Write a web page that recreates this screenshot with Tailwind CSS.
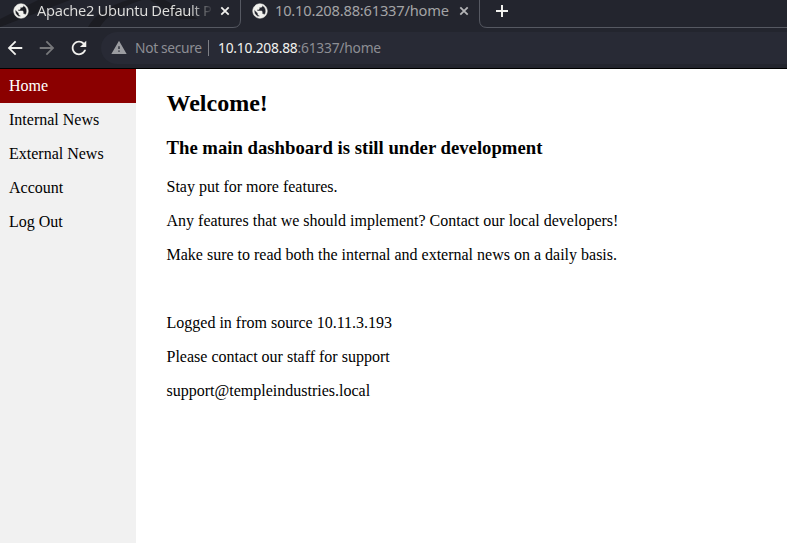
<!DOCTYPE html>
<html lang="en">
<head>
<meta charset="utf-8">
<title>Home</title>
<script src="https://cdn.jsdelivr.net/npm/@tailwindcss/browser@4"></script>
</head>
<body class="h-[543px] w-[787px] overflow-hidden bg-white">
<svg class="hidden"><defs>
<path id="globe" stroke="#f1f1ee" stroke-width=".7" d="M12 2C6.480 2 2 6.480 2 12s4.480 10 10 10 10-4.480 10-10S17.520 2 12 2zm-1 17.930c-3.950-.49-7-3.850-7-7.930 0-.62.08-1.210.21-1.790L9 15v1c0 1.100.9 2 2 2v1.930zm6.900-2.540c-.26-.81-1-1.390-1.900-1.390h-1v-3c0-.55-.45-1-1-1H8v-2h2c.55 0 1-.45 1-1V7h2c1.100 0 2-.9 2-2v-.41c2.930 1.190 5 4.060 5 7.410 0 2.080-.8 3.970-2.100 5.390z"/>
</defs></svg>
<header class="flex h-[69px] flex-col border-b border-black bg-[#23252e] font-['Noto_Sans',sans-serif]">
  <div class="relative flex h-7 shrink-0">
    <svg class="absolute inset-0" width="787" height="28" fill="none">
      <path d="M0 19 38 0H70L0 27zM88 27Q98 9 128 0H142Q110 10 100 27zM150 0H165L198 19H180Z" fill="#1b1c22"/>
      <path d="M0 27.500H233Q240.500 27.500 240.500 20V0M479.500 0V20Q479.500 27.500 487 27.500H787" stroke="#565962"/>
    </svg>
    <div class="relative flex h-[22px] w-[241px] items-center pl-[13px]">
      <svg class="size-4 shrink-0 fill-[#f1f1ee]" viewBox="1 1 22 22"><use href="#globe"/></svg>
      <span class="mb-0.5 ml-2 w-[174px] bg-linear-to-r from-[#e0e0de] from-88% to-[#e0e0de]/10 bg-clip-text text-[14.670px] leading-[22px] tracking-[-0.320px] whitespace-nowrap text-transparent">Apache2 Ubuntu Default P</span>
      <svg class="ml-[9px] size-[10px] shrink-0 stroke-[#f1f1ee]" viewBox="0 0 10 10" stroke-width="1.800"><path d="M1.300 1.300 8.700 8.700M8.700 1.300 1.300 8.700"/></svg>
    </div>
    <div class="relative flex h-[22px] w-[239px] items-center pl-[11px]">
      <svg class="size-4 shrink-0 fill-[#f1f1ee]" viewBox="1 1 22 22"><use href="#globe"/></svg>
      <span class="mb-0.5 ml-[7px] w-[177px] whitespace-nowrap text-[14.670px] leading-[22px] tracking-[-0.200px] text-[#a3a4a6]">10.10.208.88:61337/home</span>
      <svg class="ml-[7px] size-[10px] shrink-0 stroke-[#b4b5b7]" viewBox="0 0 10 10" stroke-width="1.800"><path d="M1.300 1.300 8.700 8.700M8.700 1.300 1.300 8.700"/></svg>
    </div>
    <svg class="relative mt-[5px] ml-4 size-3 stroke-[#f1f1ee]" viewBox="0 0 12 12" stroke-width="2"><path d="M0 6H12M6 0V12"/></svg>
  </div>
  <div class="flex h-10 items-center pl-[5px]">
    <svg class="size-5 fill-[#f1f1ee]" viewBox="1 1 22 22"><path d="M20 11H7.830l5.590-5.590L12 4l-8 8 8 8 1.410-1.410L7.830 13H20z"/></svg>
    <svg class="ml-3 size-5 fill-[#77787b]" viewBox="1 1 22 22"><path d="M12 4l-1.410 1.410L16.170 11H4v2h12.170l-5.580 5.590L12 20l8-8z"/></svg>
    <svg class="ml-3 size-5 fill-[#f1f1ee]" viewBox="1 1 22 22"><path d="M17.650 6.350C16.200 4.900 14.210 4 12 4c-4.420 0-7.990 3.580-7.990 8s3.570 8 7.990 8c3.730 0 6.840-2.550 7.730-6h-2.080c-.82 2.330-3.040 4-5.650 4-3.310 0-6-2.690-6-6s2.690-6 6-6c1.660 0 3.140.69 4.220 1.780L13 11h7V4l-2.350 2.350z"/></svg>
    <div class="ml-3 flex h-8 flex-1 items-center rounded-l-full bg-[#282a35] pl-[10px] text-[13.800px]">
      <svg class="size-4 fill-[#9b9ca1]" viewBox="0.500 1 23 23"><path d="M1 21h22L12 2 1 21zm12-3h-2v-2h2v2zm0-4h-2v-4h2v4z"/></svg>
      <span class="ml-2 w-[73px] tracking-[-0.350px] whitespace-nowrap text-[#8d8e94]">Not secure</span>
      <span class="h-4 w-px bg-[#7d7e84]"></span>
      <span class="ml-[9px] tracking-[-0.220px] whitespace-nowrap text-[#8d8e94]"><span class="text-[#f1f1ee]">10.10.208.88</span>:61337/home</span>
    </div>
  </div>
</header>
<div class="flex h-[474px] font-['Liberation_Serif',serif] text-base leading-[18px] text-black">
  <nav class="w-[136px] bg-[#f1f1f1]">
    <a class="block bg-[#8b0000] px-[9px] py-2 text-white">Home</a>
    <a class="block px-[9px] py-2">Internal News</a>
    <a class="block px-[9px] py-2">External News</a>
    <a class="block px-[9px] py-2">Account</a>
    <a class="block px-[9px] py-2">Log Out</a>
  </nav>
  <main class="pt-5 pl-[30.500px]">
    <h2 class="text-2xl leading-7 font-bold">Welcome!</h2>
    <h3 class="mt-5 text-[18.720px] leading-[22px] font-bold">The main dashboard is still under development</h3>
    <p class="mt-[19px]">Stay put for more features.</p>
    <p class="mt-4">Any features that we should implement? Contact our local developers!</p>
    <p class="mt-4">Make sure to read both the internal and external news on a daily basis.</p>
    <p class="mt-[50px]">Logged in from source 10.11.3.193</p>
    <p class="mt-4">Please contact our staff for support</p>
    <p class="mt-4">support@templeindustries.local</p>
  </main>
</div>
</body>
</html>
